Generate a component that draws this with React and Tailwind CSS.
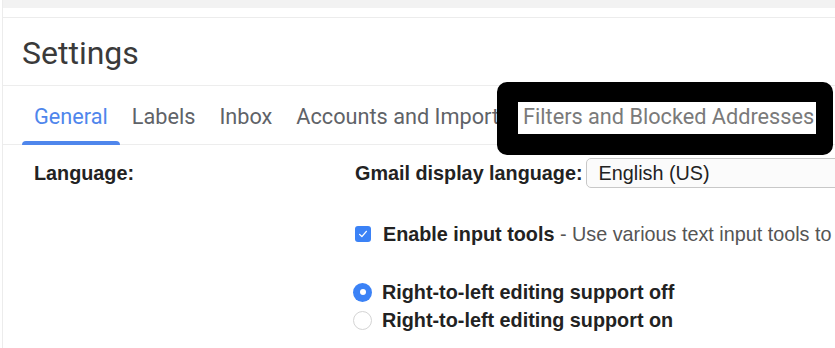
export default function App() {
  const tabs = ["General", "Labels", "Inbox", "Accounts and Import", "Filters and Blocked Addresses"];

  return (
    <div className="relative h-[348px] w-[835px] overflow-hidden bg-white font-['Liberation_Sans',Arial,sans-serif]">
      <div className="ml-[2px] h-full border-l border-[#ececec]">
        <div className="h-[8px] bg-[#f2f2f2]" />
        <div className="h-[10px] border-b border-[#ececec]" />

        {/* title */}
        <div className="flex h-[68px] items-center border-b border-[#ededed] pl-[19px] pt-[2px] font-['Roboto',sans-serif] text-[32px] text-[#3a3a3a]">
          Settings
        </div>

        {/* tabs */}
        <div className="flex h-[59px] border-b border-[#ededed] pl-[19px] font-['Roboto',sans-serif] text-[21.7px] whitespace-nowrap">
          {tabs.map((t, i) => (
            <div
              key={t}
              className={
                "relative flex items-center px-3 pt-[5px] " +
                (i === 0 ? "text-[#4f86ec]" : i === 4 ? "text-[#7a7a7a]" : "text-[#5f6368]")
              }
            >
              {t}
              {i === 0 && <span className="absolute bottom-[-1px] left-0 right-0 h-[4px] rounded-t-full bg-[#4f86ec]" />}
            </div>
          ))}
        </div>

        {/* language section */}
        <div className="flex pl-[31px] pt-[13px] text-[19.8px] leading-[22px] text-[#222]">
          <div className="w-[321px] shrink-0 pt-[4px] font-bold">Language:</div>
          <div className="min-w-0 flex-1 whitespace-nowrap">
            <div className="flex items-center">
              <span className="font-bold">Gmail display language:</span>
              <div className="ml-[3px] flex h-[30px] w-[300px] shrink-0 items-center rounded-[5px] border border-[#c8c8c8] bg-[#fbfbfb] pl-[12px] text-[#222]">
                English (US)
              </div>
            </div>

            <label className="mt-[35px] flex items-center">
              <span className="mr-[12px] flex h-[16px] w-[16px] shrink-0 items-center justify-center rounded-[3px] bg-[#3b82f6]">
                <svg viewBox="0 0 16 16" className="h-[12px] w-[12px]">
                  <path d="M3.5 8.5l3 3 6-7" fill="none" stroke="white" strokeWidth="1.8" strokeLinecap="round" strokeLinejoin="round" />
                </svg>
              </span>
              <span className="font-bold">Enable input tools</span>
              <span className="text-[#555]">&nbsp;- Use various text input tools to</span>
            </label>

            <div className="mt-[36px] flex items-center">
              <span className="mr-[10px] ml-[-2px] flex h-[19px] w-[19px] shrink-0 items-center justify-center rounded-full bg-[#3b82f6]">
                <span className="h-[6px] w-[6px] rounded-full bg-white" />
              </span>
              <span className="font-bold">Right-to-left editing support off</span>
            </div>
            <div className="mt-[6px] flex items-center">
              <span className="mr-[10px] ml-[-2px] h-[19px] w-[19px] shrink-0 rounded-full border border-[#d4d4d4] bg-white" />
              <span className="font-bold">Right-to-left editing support on</span>
            </div>
          </div>
        </div>
      </div>

      {/* highlight annotation */}
      <div className="absolute left-[497px] top-[82px] h-[73px] w-[336px] rounded-[10px] border-t-[20px] border-r-[17px] border-b-[21px] border-l-[21px] border-black" />
    </div>
  );
}
